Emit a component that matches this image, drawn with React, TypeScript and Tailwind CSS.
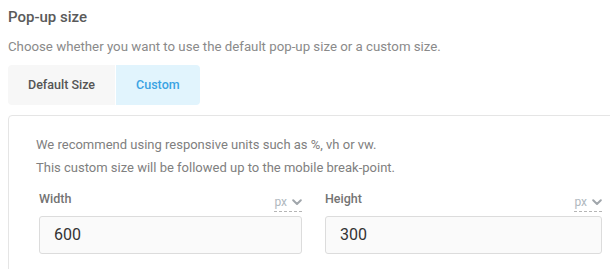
import React from "react";

function Unit() {
  return (
    <div className="flex items-center gap-[5px] border-b border-dashed border-[#b5b5b5] pb-[2px] text-[12px] leading-[14px] text-[#b0b8be]">
      <span>px</span>
      <svg width="10" height="7" viewBox="0 0 10 7" fill="none">
        <path d="M1.2 1.3 L5 5 L8.8 1.3" stroke="#a0a6ab" strokeWidth="2" strokeLinecap="round" strokeLinejoin="round" />
      </svg>
    </div>
  );
}

function Field({ label, value, width }: { label: string; value: string; width: string }) {
  return (
    <div className={`flex flex-col ${width}`}>
      <div className="flex items-end justify-between h-[24px]">
        <span className="text-[12.5px] leading-[16px] font-medium text-[#737373] mb-[5px]">{label}</span>
        <Unit />
      </div>
      <div className="mt-[4px] h-[38px] rounded-[3px] border border-[#dcdcdc] bg-[#fafafa] flex items-center px-[14px] text-[16px] text-[#333]">
        {value}
      </div>
    </div>
  );
}

export default function App() {
  return (
    <div className="w-[610px] h-[269px] overflow-hidden bg-white" style={{ fontFamily: "Roboto, 'Liberation Sans', sans-serif" }}>
      <div className="pl-[8px] pt-[8px]">
        <h2 className="text-[15px] leading-[18px] font-medium text-[#5a5a5a]">Pop-up size</h2>
        <p className="mt-[13px] text-[13.25px] leading-[16px] text-[#8a8a8a]">
          Choose whether you want to use the default pop-up size or a custom size.
        </p>
        <div className="mt-[10px] flex h-[40px] gap-[1px]">
          <div className="flex items-center px-[20px] bg-[#f7f7f7] rounded-l-[4px] text-[12.5px] font-medium text-[#555]">
            Default Size
          </div>
          <div className="flex items-center px-[20px] bg-[#e1f4fd] rounded-r-[4px] text-[12.5px] font-medium text-[#3aa3e3]">
            Custom
          </div>
        </div>
        <div className="mt-[10px] w-[640px] h-[200px] border border-[#e5e5e5] rounded-[4px] pl-[27px] pt-[17px]">
          <p className="text-[13px] leading-[23px] text-[#808080]">
            We recommend using responsive units such as %, vh or vw.
          </p>
          <p className="text-[13px] leading-[23px] text-[#808080]">
            This custom size will be followed up to the mobile break-point.
          </p>
          <div className="mt-[9px] ml-[3px] flex gap-[23px]">
            <Field label="Width" value="600" width="w-[263px]" />
            <Field label="Height" value="300" width="w-[277px]" />
          </div>
        </div>
      </div>
    </div>
  );
}
